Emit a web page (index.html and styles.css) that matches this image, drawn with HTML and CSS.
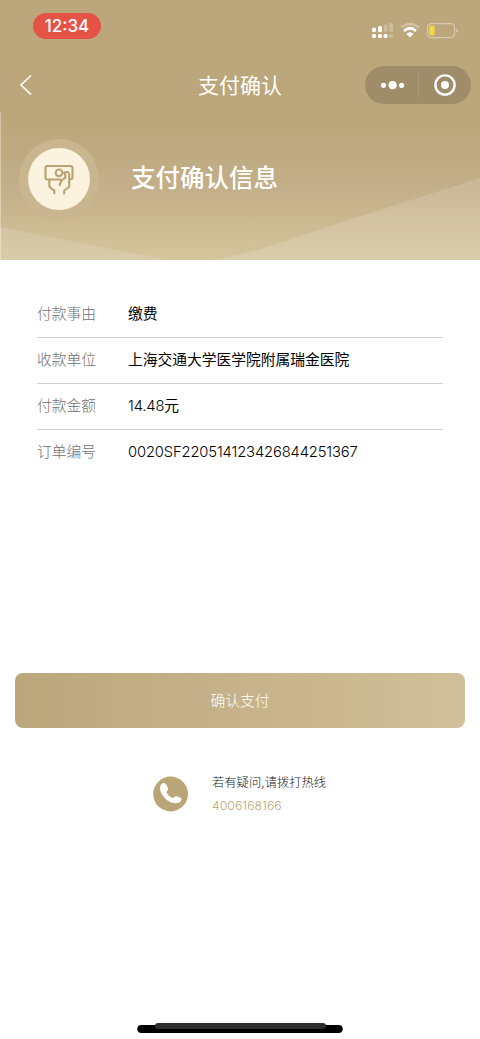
FILE: index.html
```html
<!DOCTYPE html>
<html lang="zh-CN">
<head>
<meta charset="utf-8">
<title>支付确认</title>
<link rel="stylesheet" href="styles.css">
</head>
<body>
<div class="page">
  <header class="top">
    <div class="status">
      <span class="clock">12:34</span>
      <svg class="signals" width="88" height="18" viewBox="0 0 88 18">
        <g fill="#fff">
          <rect x="1" y="5.5" width="4" height="4.5" rx="1.5"/>
          <rect x="7" y="4" width="4" height="6" rx="1.5"/>
          <rect x="1" y="12" width="4" height="4" rx="1.5"/>
          <rect x="7" y="12" width="4" height="4" rx="1.5"/>
          <rect x="12.6" y="12" width="4" height="4" rx="1.5"/>
        </g>
        <g fill="#fff" opacity=".25">
          <rect x="12.6" y="2.5" width="4" height="7.5" rx="1.2"/>
          <rect x="18" y="1" width="4" height="9" rx="1.2"/>
          <rect x="18" y="12" width="4" height="4" rx="1.5"/>
        </g>
        <g fill="none" stroke="#fff">
          <path opacity=".3" stroke-width="2.6" d="M30 5.6Q39-1.6 48 5.6"/>
          <path stroke-width="2.8" d="M33 9Q39 3.6 45 9"/>
        </g>
        <path fill="#fff" d="M35.4 11.9Q39 8.8 42.6 11.9L39 15.5Z"/>
        <rect x="56.5" y="1.6" width="27" height="14" rx="4" fill="none" stroke="#fff" stroke-opacity=".4" stroke-width="1.2"/>
        <path d="M85.5 6.5Q88.2 8.6 85.5 11Z" fill="#fff" opacity=".55"/>
        <rect x="58.2" y="3.6" width="5.4" height="10" rx="2" fill="#f5d745"/>
      </svg>
    </div>
    <div class="nav">
      <svg class="back" width="14" height="22" viewBox="0 0 14 22"><path d="M12 1.5L2 11L12 20.5" fill="none" stroke="#fff" stroke-width="1.7"/></svg>
      <h1 class="title">支付确认</h1>
      <svg class="capsule" width="106" height="38" viewBox="0 0 106 38">
        <rect width="106" height="38" rx="19" fill="#9f8d6a"/>
        <g fill="#fff"><circle cx="18.5" cy="19.3" r="2.6"/><circle cx="27.6" cy="19.2" r="4.1"/><circle cx="36.6" cy="19.3" r="2.6"/><circle cx="80" cy="19" r="4"/></g>
        <path d="M53.5 7V31" stroke="#ad9b79"/>
        <circle cx="80" cy="19" r="9.6" fill="none" stroke="#fff" stroke-width="2.4"/>
      </svg>
    </div>
  </header>

  <section class="hero">
    <svg class="waves" width="480" height="148" viewBox="0 0 480 148">
      <path fill="#fff" fill-opacity=".13" d="M0 115Q90 133 168 148H0Z"/>
      <path fill="#fff" fill-opacity=".14" d="M212 148C250 142 290 128 330 114L480 66V148Z"/>
      <path d="M.5 0V148" stroke="#fff" stroke-opacity=".35"/>
    </svg>
    <div class="badge">
      <svg width="62" height="62" viewBox="1 .5 62 62">
        <g fill="none" stroke="#b8a373" stroke-width="2.1" stroke-linejoin="round">
          <path d="M34 32H20.5Q18.5 32 18.5 30V20.5Q18.5 18.5 20.5 18.5H43.5Q45.5 18.5 45.5 20.5V30Q45.5 31.5 43 32"/>
          <circle cx="32" cy="25.3" r="3.3"/>
          <path d="M36 25.6Q41.2 23 42.2 26.5V39.5L37.2 43V46.8"/>
          <path d="M38.2 25.5V30.5Q33.2 32.5 32.7 38.5"/>
          <path d="M22.3 31.5V38.5Q22.8 40.3 27.3 43V46.8"/>
        </g>
      </svg>
    </div>
    <h2 class="heading">支付确认信息</h2>
  </section>

  <dl class="details">
    <div class="row"><dt>付款事由</dt><dd>缴费</dd></div>
    <div class="row"><dt>收款单位</dt><dd>上海交通大学医学院附属瑞金医院</dd></div>
    <div class="row"><dt>付款金额</dt><dd><span class="amount">14.48</span>元</dd></div>
    <div class="row"><dt>订单编号</dt><dd class="order">0020SF220514123426844251367</dd></div>
  </dl>

  <button class="pay" type="button">确认支付</button>

  <div class="hotline">
    <svg width="36" height="36" viewBox="0 0 36 36">
      <circle cx="17.6" cy="18" r="17.4" fill="#baa577"/>
      <path fill="#fff" d="M7.6 9.2C8.8 7 11.5 6.1 13 8.2L15 12C15.7 13.6 13.9 14.8 13.4 16.2C14.2 18.7 17 21.2 19.8 22C21.2 21.5 22.4 19.7 24 20.2L27.6 21.8C29.2 22.8 28.4 25.2 26.6 26.3C23.6 27.9 19 27.4 14.9 24.7C9.6 21 5.6 14 7.6 9.2Z"/>
    </svg>
    <div class="contact">
      <span class="ask">若有疑问,请拨打热线</span>
      <span class="phone">4006168166</span>
    </div>
  </div>

  <svg class="home" width="206" height="12" viewBox="0 0 206 12">
    <rect x="0.3" y="3" width="205.4" height="8" rx="4" fill="#000"/>
    <rect x="18" y="1" width="171" height="6" rx="3" fill="#2d2d2d"/>
  </svg>
</div>
</body>
</html>
```
FILE: styles.css
```css
* { box-sizing: border-box; }
body, h1, h2, dl, dd { margin: 0; }
body { background: #fff; font-family: Inter, "Noto Sans CJK SC", sans-serif; }
.page { display: flex; flex-direction: column; width: 480px; height: 1039px; }
.top { height: 112px; background: #bca67b; }
.status { display: flex; justify-content: space-between; align-items: flex-start; height: 66px; padding: 13px 21px 0 33px; }
.clock { width: 68px; height: 26px; border-radius: 13px; background: #e55347; color: #fff; font-size: 17px; font-weight: 450; line-height: 27px; text-align: center; }
.signals { margin-top: 9px; }
.nav { display: grid; grid-template-columns: 106px 1fr 106px; align-items: center; height: 38px; padding: 0 9px; }
.back { margin-left: 10px; }
.title { height: 38px; color: #fff; font-size: 21px; font-weight: 400; line-height: 40px; text-align: center; }
.hero { display: grid; grid-template-columns: 80px 1fr; column-gap: 32px; align-items: start; height: 148px; padding: 27px 0 0 19px; background: linear-gradient(#bba67a, #c2ae88 50%, #d5c59c); position: relative; }
.waves { position: absolute; left: 0; top: 0; }
.badge { position: relative; display: grid; place-items: center; width: 80px; height: 80px; border-radius: 50%; background: #c9b68f; }
.badge svg { border-radius: 50%; background: #fbf2df; }
.heading { position: relative; color: #fff; font-size: 24.5px; font-weight: 500; line-height: 78px; }
.details { padding: 32px 37px 0; height: 413px; }
.row { display: grid; grid-template-columns: 91px 1fr; height: 46px; border-bottom: 1px solid #d0d0d0; font-size: 14.75px; line-height: 45px; }
.row:last-child { border-bottom: 0; }
.row dt { color: #707070; font-weight: 300; }
.row dd { color: #000; white-space: nowrap; }
.amount, .order { font-weight: 350; letter-spacing: -.14px; }
.pay { width: 450px; height: 55px; margin-left: 15px; padding: 0; border: 0; border-radius: 8px; background: linear-gradient(90deg, #bca67c, #d0bf99); color: #fff; font: 300 14.75px/54px Inter, "Noto Sans CJK SC", sans-serif; }
.hotline { display: flex; gap: 23px; height: 60px; margin: 48px 0 0 153px; }
.contact { display: flex; flex-direction: column; margin-top: -5px; }
.ask { color: #222; font-size: 12.3px; font-weight: 300; line-height: 24px; }
.phone { color: #b8a577; font-size: 12.3px; font-weight: 300; line-height: 22px; }
.home { margin: auto 0 5px 137px; }
```
